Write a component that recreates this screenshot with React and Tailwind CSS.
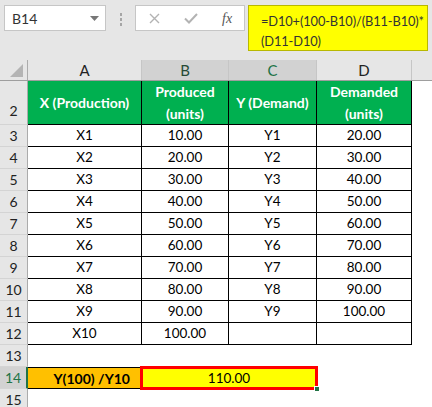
const rows = [
  ["3", "X1", "10.00", "Y1", "20.00"],
  ["4", "X2", "20.00", "Y2", "30.00"],
  ["5", "X3", "30.00", "Y3", "40.00"],
  ["6", "X4", "40.00", "Y4", "50.00"],
  ["7", "X5", "50.00", "Y5", "60.00"],
  ["8", "X6", "60.00", "Y6", "70.00"],
  ["9", "X7", "70.00", "Y7", "80.00"],
  ["10", "X8", "80.00", "Y8", "90.00"],
  ["11", "X9", "90.00", "Y9", "100.00"],
  ["12", "X10", "100.00", "", ""],
];

const font = { fontFamily: "Lato, 'Open Sans', sans-serif" };

const RowHead = ({ n, active, align = "items-center" }) => (
  <div
    className={`w-[28px] shrink-0 flex justify-center ${align} text-[14px] border-b border-[#d4d4d4] ${
      active
        ? "bg-[#d2d2d2] text-[#217346] border-r-2 border-r-[#217346]"
        : "bg-[#e6e6e6] text-[#222] border-r border-r-[#ababab]"
    }`}
  >
    {n}
  </div>
);

const Cell = ({ w, children, className = "" }) => (
  <div
    className={`${w} shrink-0 flex items-center justify-center border-r border-b border-black ${className}`}
  >
    {children}
  </div>
);

export default function App() {
  return (
    <div className="w-[432px] h-[407px] overflow-hidden bg-white text-black" style={font}>
      {/* formula bar */}
      <div className="h-[60px] bg-[#e6e6e6] flex items-start pl-[4px] pt-[5px]">
        <div className="w-[102px] h-[26px] bg-white border border-[#c6c6c6] flex items-center justify-between pl-[7px] pr-[6px]">
          <span className="text-[14px] text-[#333]">B14</span>
          <svg width="9" height="5" viewBox="0 0 9 5">
            <path d="M0 0h9L4.5 5z" fill="#777" />
          </svg>
        </div>
        <div className="ml-[14px] mt-[8px] flex flex-col gap-[2px]">
          <div className="w-[2px] h-[3px] bg-[#a6a6a6]" />
          <div className="w-[2px] h-[3px] bg-[#a6a6a6]" />
          <div className="w-[2px] h-[3px] bg-[#a6a6a6]" />
        </div>
        <div className="ml-[13px] w-[110px] h-[26px] bg-white border border-[#c6c6c6] flex items-center pl-[13px]">
          <svg width="11" height="11" viewBox="0 0 11 11">
            <path d="M1 1l9 9M10 1l-9 9" stroke="#b3b3b3" strokeWidth="1.4" />
          </svg>
          <svg className="ml-[24px]" width="14" height="11" viewBox="0 0 14 11">
            <path d="M1 5.5l4 4L13 1" stroke="#b3b3b3" strokeWidth="2" fill="none" />
          </svg>
          <span className="ml-[24px] text-[14px] italic text-[#555]" style={{ fontFamily: "'Liberation Serif', serif" }}>
            fx
          </span>
        </div>
        <div className="ml-[3px] w-[180px] h-[46px] bg-[#ffff00] border border-[#b8b800] pl-[12px] pt-[5px] text-[12.8px] tracking-[-0.1px] leading-[20px] text-[#333] whitespace-nowrap overflow-hidden">
          =D10+(100-B10)/(B11-B10)*
          <br />
          (D11-D10)
        </div>
      </div>

      {/* column headers */}
      <div className="flex h-[21px] bg-[#e6e6e6] border-b border-[#9e9e9e] text-[15px]">
        <div className="w-[28px] shrink-0 border-r border-[#ababab] flex items-end justify-end pr-[4px] pb-[3px]">
          <svg width="13" height="13" viewBox="0 0 13 13">
            <path d="M13 0v13H0z" fill="#b4b4b4" />
          </svg>
        </div>
        <div className="w-[114px] shrink-0 border-r border-[#c6c6c6] flex items-center justify-center text-[#222]">A</div>
        <div className="w-[87px] shrink-0 border-r border-[#c6c6c6] bg-[#d2d2d2] flex items-center justify-center text-[#264a36]">B</div>
        <div className="w-[88px] shrink-0 border-r border-[#c6c6c6] bg-[#d2d2d2] flex items-center justify-center text-[#217346]">C</div>
        <div className="w-[95px] shrink-0 border-r border-[#c6c6c6] flex items-center justify-center text-[#222]">D</div>
        <div className="flex-1" />
      </div>

      {/* row 2: table header */}
      <div className="flex h-[44px]">
        <RowHead n="2" align="items-end pb-[3px]" />
        <Cell w="w-[114px]" className="bg-[#00b050] text-white font-bold text-[14px]">X (Production)</Cell>
        <Cell w="w-[87px]" className="bg-[#00b050] text-white font-bold text-[14px] flex-col leading-[22px]">
          <span>Produced</span>
          <span>(units)</span>
        </Cell>
        <Cell w="w-[88px]" className="bg-[#00b050] text-white font-bold text-[14px]">Y (Demand)</Cell>
        <Cell w="w-[95px]" className="bg-[#00b050] text-white font-bold text-[14px] flex-col leading-[22px]">
          <span>Demanded</span>
          <span>(units)</span>
        </Cell>
        <div className="flex-1" />
      </div>

      {/* data rows */}
      {rows.map((r) => (
        <div key={r[0]} className="flex h-[22px] text-[13.5px]">
          <RowHead n={r[0]} />
          <Cell w="w-[114px]">{r[1]}</Cell>
          <Cell w="w-[87px]">{r[2]}</Cell>
          <Cell w="w-[88px]">{r[3]}</Cell>
          <Cell w="w-[95px]">{r[4]}</Cell>
          <div className="flex-1" />
        </div>
      ))}

      {/* row 13 */}
      <div className="flex h-[22px]">
        <RowHead n="13" />
        <div className="flex-1" />
      </div>

      {/* row 14 */}
      <div className="flex h-[22px] text-[13.5px]">
        <RowHead n="14" active />
        <div className="w-[113px] shrink-0 bg-[#ffc000] border-y border-black flex items-center justify-end pr-[11px] font-bold text-[14px]">
          Y(100) /Y10
        </div>
        <div className="relative w-[176px] shrink-0 bg-[#ffff00] flex items-center justify-center">
          110.00
          <div className="absolute -left-[1px] -top-[1px] -right-[1px] -bottom-[1px] border-[3px] border-[#ff0000]" />
          <div className="absolute -right-[3px] -bottom-[3px] w-[6px] h-[6px] bg-[#217346] border border-white" />
        </div>
        <div className="flex-1" />
      </div>

      {/* row 15 */}
      <div className="flex h-[22px]">
        <RowHead n="15" />
        <div className="flex-1" />
      </div>
    </div>
  );
}
